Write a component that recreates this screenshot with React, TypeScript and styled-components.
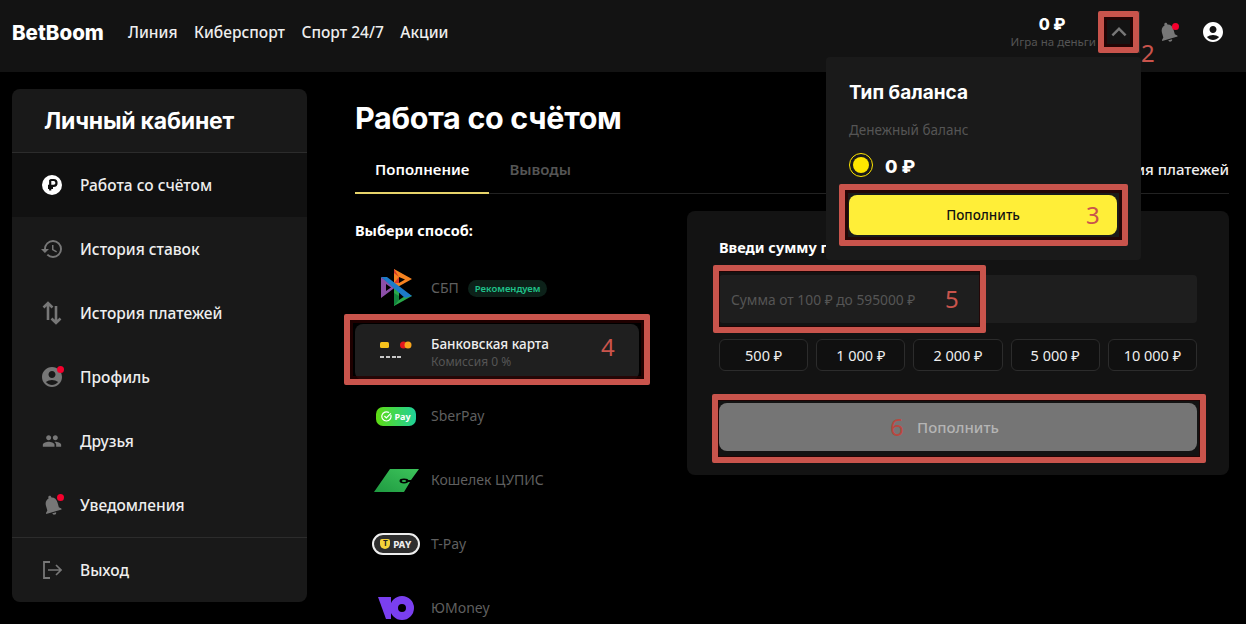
import React from "react";
import styled, { createGlobalStyle } from "styled-components";
import { MdAccountCircle, MdExpandLess, MdHistory, MdNotifications, MdPeople } from "react-icons/md";

const GlobalStyle = createGlobalStyle`
  html, body {
    margin: 0;
    height: 624px;
    overflow: hidden;
    background: #000;
    color: #fff;
    font-family: "Noto Sans", "Liberation Sans", sans-serif;
  }
  * { box-sizing: border-box; }
`;

const RED = "#c9544c";

const Page = styled.div`
  width: 1246px;
  height: 624px;
  overflow: hidden;
  position: relative;
`;

const Header = styled.header`
  height: 72px;
  background: #131313;
  display: flex;
  align-items: center;
  padding: 0 21px 8px 12px;
  box-shadow: 0 6px 14px rgba(0, 0, 0, 0.8);
`;

const Logo = styled.div`
  font-family: "Inter", sans-serif;
  font-weight: 800;
  font-size: 20.5px;
  width: 116px;
`;

const Nav = styled.nav`
  display: flex;
  gap: 16.5px;
  flex: 1;
`;

const NavLink = styled.a`
  font-size: 15.5px;
  font-weight: 500;
  color: #eee;
`;

const Balance = styled.div`
  display: flex;
  flex-direction: column;
  align-items: flex-end;
  width: 90px;
  margin-right: 2px;
`;

const BalanceValue = styled.div`
  font-family: "Inter", sans-serif;
  font-weight: 800;
  font-size: 16px;
  line-height: 20px;
  width: 100%;
  text-align: center;
  padding-left: 2px;
`;

const BalanceLabel = styled.div`
  font-size: 11.5px;
  line-height: 16px;
  color: #555;
  white-space: nowrap;
`;

const ArrowButton = styled.div`
  position: relative;
  width: 42px;
  height: 42px;
  display: flex;
  align-items: center;
  justify-content: center;
  color: #777;
  font-size: 30px;
  border-right: 1px solid #2a2a2a;
`;

const HeaderIcon = styled.div<{ $color: string; $left: number }>`
  position: relative;
  margin-left: ${({ $left }) => $left}px;
  color: ${({ $color }) => $color};
  font-size: 24px;
  line-height: 0;
`;

const TiltedBell = styled(MdNotifications)`
  transform: rotate(-16deg);
`;

const Dot = styled.span<{ $top: number; $right: number }>`
  position: absolute;
  top: ${({ $top }) => $top}px;
  right: ${({ $right }) => $right}px;
  width: 7px;
  height: 7px;
  border-radius: 50%;
  background: #f5002d;
`;

const Main = styled.main`
  display: flex;
  gap: 48px;
  padding: 17px 0 0 12px;
`;

const Sidebar = styled.aside`
  width: 295px;
  height: 513px;
  flex: none;
  background: #191919;
  border-radius: 8px;
  overflow: hidden;
`;

const SidebarTitle = styled.div`
  height: 64px;
  padding: 0 32px;
  display: flex;
  align-items: center;
  font-family: "Inter", sans-serif;
  font-weight: 700;
  font-size: 23px;
  letter-spacing: -0.2px;
  border-bottom: 1px solid #2c2c2c;
`;

const SideItem = styled.div<{ $active?: boolean; $divided?: boolean }>`
  height: ${({ $divided }) => ($divided ? 65 : 64)}px;
  display: flex;
  align-items: center;
  padding-left: 28px;
  gap: 16px;
  font-size: 15.5px;
  font-weight: 500;
  color: #eee;
  background: ${({ $active }) => ($active ? "#111" : "transparent")};
  border-top: ${({ $divided }) => ($divided ? "1px solid #2c2c2c" : "none")};
`;

const SideIcon = styled.span<{ $active?: boolean }>`
  position: relative;
  width: 24px;
  height: 24px;
  flex: none;
  display: flex;
  align-items: center;
  justify-content: center;
  font-size: 24px;
  line-height: 0;
  color: ${({ $active }) => ($active ? "#fff" : "#777")};
`;

const Content = styled.section`
  width: 874px;
  flex: none;
  padding-top: 17px;
`;

const PageTitle = styled.h1`
  margin: 0;
  height: 36px;
  font-family: "Inter", sans-serif;
  font-weight: 700;
  font-size: 30.5px;
  line-height: 24px;
  letter-spacing: -0.3px;
`;

const Tabs = styled.div`
  margin-top: 3px;
  height: 49px;
  display: flex;
  align-items: stretch;
  border-bottom: 1px solid #222;
`;

const Tab = styled.div<{ $active?: boolean }>`
  padding: 0 20px;
  display: flex;
  align-items: center;
  margin-bottom: -1px;
  font-size: 15px;
  font-weight: 600;
  color: ${({ $active }) => ($active ? "#fff" : "#555")};
  border-bottom: 2px solid ${({ $active }) => ($active ? "#e6d36a" : "transparent")};
`;

const TabRight = styled(Tab)`
  margin-left: auto;
  padding: 0;
  font-weight: 500;
  color: #eee;
`;

const Columns = styled.div`
  display: flex;
  gap: 48px;
  margin-top: 17px;
`;

const Methods = styled.div`
  width: 284px;
  flex: none;
  padding-top: 9px;
`;

const MethodsTitle = styled.div`
  font-size: 14.5px;
  font-weight: 700;
  line-height: 20px;
  margin-bottom: 20px;
`;

const MethodList = styled.div`
  display: flex;
  flex-direction: column;
  gap: 8px;
`;

const Method = styled.div<{ $active?: boolean }>`
  position: relative;
  height: 56px;
  border-radius: 8px;
  display: flex;
  align-items: center;
  background: ${({ $active }) => ($active ? "#1f1f1f" : "transparent")};
`;

const MethodIcon = styled.div`
  width: 76px;
  flex: none;
  display: flex;
  justify-content: center;
  padding-left: 6px;
  svg { display: block; }
`;

const MethodText = styled.div`
  display: flex;
  flex-direction: column;
`;

const MethodName = styled.div<{ $active?: boolean }>`
  display: flex;
  align-items: center;
  gap: 9px;
  font-size: ${({ $active }) => ($active ? 13.5 : 14)}px;
  line-height: 20px;
  font-weight: ${({ $active }) => ($active ? 500 : 400)};
  color: ${({ $active }) => ($active ? "#eee" : "#5f5f5f")};
`;

const MethodHint = styled.div`
  font-size: 12px;
  line-height: 16px;
  color: #555;
`;

const Badge = styled.span`
  height: 17px;
  padding: 0 7px;
  border-radius: 9px;
  font-size: 9.5px;
  font-weight: 600;
  line-height: 17px;
  color: #1fc28a;
  background: #0c2119;
`;

const Panel = styled.div`
  width: 542px;
  height: 264px;
  flex: none;
  background: #131313;
  border-radius: 8px;
  padding: 26px 32px 0;
`;

const PanelTitle = styled.div`
  font-size: 14.5px;
  font-weight: 700;
  line-height: 20px;
  margin-bottom: 18px;
`;

const AmountField = styled.div`
  position: relative;
  height: 48px;
  background: #1e1e1e;
  border-radius: 4px;
  padding-left: 12px;
  display: flex;
  align-items: center;
  font-size: 13.8px;
  color: #555;
`;

const Presets = styled.div`
  display: grid;
  grid-template-columns: repeat(5, 1fr);
  gap: 8px;
  margin-top: 16px;
`;

const Preset = styled.div`
  height: 32px;
  border: 1px solid #2c2c2c;
  border-radius: 6px;
  background: #101010;
  display: flex;
  align-items: center;
  justify-content: center;
  font-size: 14.5px;
  font-weight: 400;
  color: #eee;
`;

const SubmitButton = styled.div`
  position: relative;
  margin-top: 32px;
  height: 48px;
  border-radius: 8px;
  background: #757575;
  display: flex;
  align-items: center;
  justify-content: center;
  font-size: 15px;
  font-weight: 500;
  color: #b4b4b4;
`;

/* раскрытое меню баланса лежит поверх вкладок и панели */
const BalanceMenu = styled.div`
  position: absolute;
  top: 57px;
  left: 826px;
  width: 315px;
  height: 203px;
  background: #1a1a1a;
  border-radius: 4px;
  padding: 24px 23px 0;
`;

const MenuTitle = styled.div`
  font-family: "Inter", sans-serif;
  font-weight: 700;
  font-size: 19px;
  line-height: 24px;
`;

const MenuLabel = styled.div`
  margin-top: 15px;
  font-size: 13.5px;
  line-height: 20px;
  color: #555;
`;

const MenuBalance = styled.div`
  margin-top: 13px;
  display: flex;
  align-items: center;
  gap: 12px;
  font-family: "Inter", sans-serif;
  font-weight: 800;
  font-size: 18px;
`;

const MenuAmount = styled.span`
  padding-top: 3px;
`;

const Radio = styled.span`
  width: 24px;
  height: 24px;
  border-radius: 50%;
  border: 1px solid #ffe600;
  display: flex;
  align-items: center;
  justify-content: center;
  &::after {
    content: "";
    width: 16px;
    height: 16px;
    border-radius: 50%;
    background: #ffe600;
  }
`;

const TopUpButton = styled.div`
  position: relative;
  margin-top: 18px;
  width: 268px;
  height: 40px;
  border-radius: 8px;
  background: #ffee38;
  color: #111;
  display: flex;
  align-items: center;
  justify-content: center;
  font-size: 13.5px;
  font-weight: 500;
`;

/* красные пометки со скриншота */
const Frame = styled.span<{ $inset: string; $ring?: number }>`
  position: absolute;
  inset: ${({ $inset }) => $inset};
  border: 6px solid ${RED};
  border-radius: 2px;
  box-shadow: inset 0 0 0 ${({ $ring = 3 }) => $ring}px rgba(40, 0, 0, 0.75);
  pointer-events: none;
`;

const Mark = styled.span<{ $left: number; $top: number; $dim?: boolean }>`
  position: absolute;
  left: ${({ $left }) => $left}px;
  top: ${({ $top }) => $top}px;
  font-family: "Noto Sans", sans-serif;
  font-size: 24px;
  line-height: 28px;
  font-weight: 400;
  color: ${({ $dim }) => ($dim ? "#b8473f" : RED)};
`;

const RubleCircle = () => (
  <svg width="24" height="24" viewBox="0 0 24 24">
    <circle cx="12" cy="12" r="10" fill="#fff" />
    <path d="M10.2 6.8v10.6M10.2 7h3.4a2.9 2.9 0 0 1 0 5.8H8M8 15h5" fill="none" stroke="#111" strokeWidth="2.2" />
  </svg>
);

const TransferIcon = () => (
  <svg width="20" height="24" viewBox="0 0 20 24" fill="none" stroke="currentColor" strokeWidth="2.6">
    <path d="M6 19V2M1.5 6.5L6 2l4.500 4.500" />
    <path d="M14 5v17M9.500 17.500L14 22l4.500-4.500" />
  </svg>
);

const ExitIcon = () => (
  <svg width="20" height="18" viewBox="0 0 20 18" fill="none" stroke="currentColor" strokeWidth="1.8">
    <path d="M8 1H2v16h6" />
    <path d="M6 9h13M14 4l5 5-5 5" strokeWidth="1.6" />
  </svg>
);

const SbpLogo = () => (
  <svg width="33" height="38" viewBox="0 0 33 38">
    <path fillRule="evenodd" d="M14 0l18 10-18 10zM19 8v6l6-3.5z" fill="#f58220" />
    <path d="M14 0v4l5 4-5 6 5 0V8z" fill="#d8362a" />
    <path fillRule="evenodd" d="M14 37l18-10-18-10zM19 23v8l6-4z" fill="#2aa84a" />
    <path d="M14 37V24l5 3v4z" fill="#12843c" />
    <path fillRule="evenodd" d="M1 8l14 10.500L1 29zM6 15v7l5-3.500z" fill="#8c4fa8" />
    <path d="M1 8l6 0 25 19-7 2z" fill="#1d7bc8" />
  </svg>
);

const CardLogo = () => (
  <svg width="32" height="22" viewBox="0 0 32 22">
    <rect x="0" y="1" width="9" height="6" rx="1.5" fill="#f6c21c" />
    <circle cx="23.5" cy="4" r="3.5" fill="#e3161d" />
    <circle cx="28" cy="4" r="3.5" fill="#f8a51c" />
    <path d="M0 16h4M6 16h4M12 16h4M17 16h4" stroke="#fff" strokeWidth="1.6" />
  </svg>
);

const SberPill = styled.div`
  width: 40px;
  height: 19px;
  border-radius: 7px;
  background: linear-gradient(90deg, #5fdc12, #1fd19a);
  display: flex;
  align-items: center;
  justify-content: center;
  gap: 2px;
  font-size: 9px;
  font-weight: 700;
  color: #fff;
`;

const SberCheck = () => (
  <svg width="11" height="11" viewBox="0 0 11 11" fill="none" stroke="#fff" strokeWidth="1.2">
    <path d="M9.8 4A4.600 4.600 0 1 1 8 1.600" />
    <path d="M3.400 5l2 2 4.400-4.600" />
  </svg>
);

const CupisLogo = () => (
  <svg width="45" height="23" viewBox="0 0 45 23">
    <defs>
      <linearGradient id="cupis" x1="0" y1="1" x2="1" y2="0">
        <stop offset="0" stopColor="#1f9a41" />
        <stop offset="1" stopColor="#3dc45b" />
      </linearGradient>
    </defs>
    <path d="M16 0h29l-8 11H31l-3 2h8l-6 10H0z" fill="url(#cupis)" />
    <ellipse cx="30" cy="12" rx="4.5" ry="2.4" fill="#000" />
    <ellipse cx="30" cy="12" rx="2.2" ry="1.1" fill="#2fb14f" />
  </svg>
);

const TPill = styled.div`
  width: 48px;
  height: 22px;
  border: 2px solid #eee;
  border-radius: 11px;
  background: #2e2e2e;
  display: flex;
  align-items: center;
  justify-content: center;
  gap: 3px;
  font-family: "Inter", sans-serif;
  font-size: 9px;
  font-weight: 800;
  color: #eee;
`;

const TShield = styled.span`
  width: 10px;
  height: 10px;
  border-radius: 2px 2px 5px 5px;
  background: #f6d33a;
  color: #222;
  font-size: 7px;
  line-height: 10px;
  text-align: center;
`;

const YooLogo = () => (
  <svg width="36" height="24" viewBox="0 0 36 24">
    <path fillRule="evenodd" d="M24 0a12 12 0 1 1 0 24 12 12 0 0 1 0-24zm0 8a4 4 0 1 0 0 8 4 4 0 0 0 0-8z" fill="#7a3ff0" />
    <path d="M0 1h13v22H8z" fill="#7a3ff0" />
  </svg>
);

const navLinks = ["Линия", "Киберспорт", "Спорт 24/7", "Акции"];
const presets = ["500 ₽", "1 000 ₽", "2 000 ₽", "5 000 ₽", "10 000 ₽"];

export default function App() {
  return (
    <Page>
      <GlobalStyle />
      <Header>
        <Logo>BetBoom</Logo>
        <Nav>
          {navLinks.map((link) => (
            <NavLink key={link}>{link}</NavLink>
          ))}
        </Nav>
        <Balance>
          <BalanceValue>0 ₽</BalanceValue>
          <BalanceLabel>Игра на деньги</BalanceLabel>
        </Balance>
        <ArrowButton>
          <MdExpandLess />
          <Frame $inset="0" />
          <Mark $left={43} $top={28}>2</Mark>
        </ArrowButton>
        <HeaderIcon $color="#777" $left={16}>
          <TiltedBell />
          <Dot $top={3} $right={1} />
        </HeaderIcon>
        <HeaderIcon $color="#fff" $left={21}>
          <MdAccountCircle />
        </HeaderIcon>
      </Header>

      <Main>
        <Sidebar>
          <SidebarTitle>Личный кабинет</SidebarTitle>
          <SideItem $active>
            <SideIcon $active><RubleCircle /></SideIcon>
            Работа со счётом
          </SideItem>
          <SideItem>
            <SideIcon><MdHistory /></SideIcon>
            История ставок
          </SideItem>
          <SideItem>
            <SideIcon><TransferIcon /></SideIcon>
            История платежей
          </SideItem>
          <SideItem>
            <SideIcon>
              <MdAccountCircle />
              <Dot $top={1} $right={0} />
            </SideIcon>
            Профиль
          </SideItem>
          <SideItem>
            <SideIcon><MdPeople size={20} /></SideIcon>
            Друзья
          </SideItem>
          <SideItem>
            <SideIcon>
              <TiltedBell />
              <Dot $top={1} $right={0} />
            </SideIcon>
            Уведомления
          </SideItem>
          <SideItem $divided>
            <SideIcon><ExitIcon /></SideIcon>
            Выход
          </SideItem>
        </Sidebar>

        <Content>
          <PageTitle>Работа со счётом</PageTitle>
          <Tabs>
            <Tab $active>Пополнение</Tab>
            <Tab>Выводы</Tab>
            <TabRight>История платежей</TabRight>
          </Tabs>
          <Columns>
            <Methods>
              <MethodsTitle>Выбери способ:</MethodsTitle>
              <MethodList>
                <Method>
                  <MethodIcon><SbpLogo /></MethodIcon>
                  <MethodText>
                    <MethodName>СБП <Badge>Рекомендуем</Badge></MethodName>
                  </MethodText>
                </Method>
                <Method $active>
                  <MethodIcon><CardLogo /></MethodIcon>
                  <MethodText>
                    <MethodName $active>Банковская карта</MethodName>
                    <MethodHint>Комиссия 0 %</MethodHint>
                  </MethodText>
                  <Frame $inset="-10px -11px -5px -11px" />
                  <Mark $left={246} $top={9}>4</Mark>
                </Method>
                <Method>
                  <MethodIcon><SberPill><SberCheck />Pay</SberPill></MethodIcon>
                  <MethodText><MethodName>SberPay</MethodName></MethodText>
                </Method>
                <Method>
                  <MethodIcon><CupisLogo /></MethodIcon>
                  <MethodText><MethodName>Кошелек ЦУПИС</MethodName></MethodText>
                </Method>
                <Method>
                  <MethodIcon><TPill><TShield>T</TShield>PAY</TPill></MethodIcon>
                  <MethodText><MethodName>T-Pay</MethodName></MethodText>
                </Method>
                <Method>
                  <MethodIcon><YooLogo /></MethodIcon>
                  <MethodText><MethodName>ЮMoney</MethodName></MethodText>
                </Method>
              </MethodList>
            </Methods>
            <Panel>
              <PanelTitle>Введи сумму пополнения</PanelTitle>
              <AmountField>
                Сумма от 100 ₽ до 595000 ₽
                <Frame $inset="-10px 211px -10px -6px" $ring={1} />
                <Mark $left={226} $top={10}>5</Mark>
              </AmountField>
              <Presets>
                {presets.map((value) => (
                  <Preset key={value}>{value}</Preset>
                ))}
              </Presets>
              <SubmitButton>
                Пополнить
                <Frame $inset="-9px -9px -12px -7px" $ring={1} />
                <Mark $left={171} $top={10} $dim>6</Mark>
              </SubmitButton>
            </Panel>
          </Columns>
        </Content>
      </Main>

      <BalanceMenu>
        <MenuTitle>Тип баланса</MenuTitle>
        <MenuLabel>Денежный баланс</MenuLabel>
        <MenuBalance>
          <Radio />
          <MenuAmount>0 ₽</MenuAmount>
        </MenuBalance>
        <TopUpButton>
          Пополнить
          <Frame $inset="-11px -11px -11px -10px" />
          <Mark $left={237} $top={6}>3</Mark>
        </TopUpButton>
      </BalanceMenu>
    </Page>
  );
}
